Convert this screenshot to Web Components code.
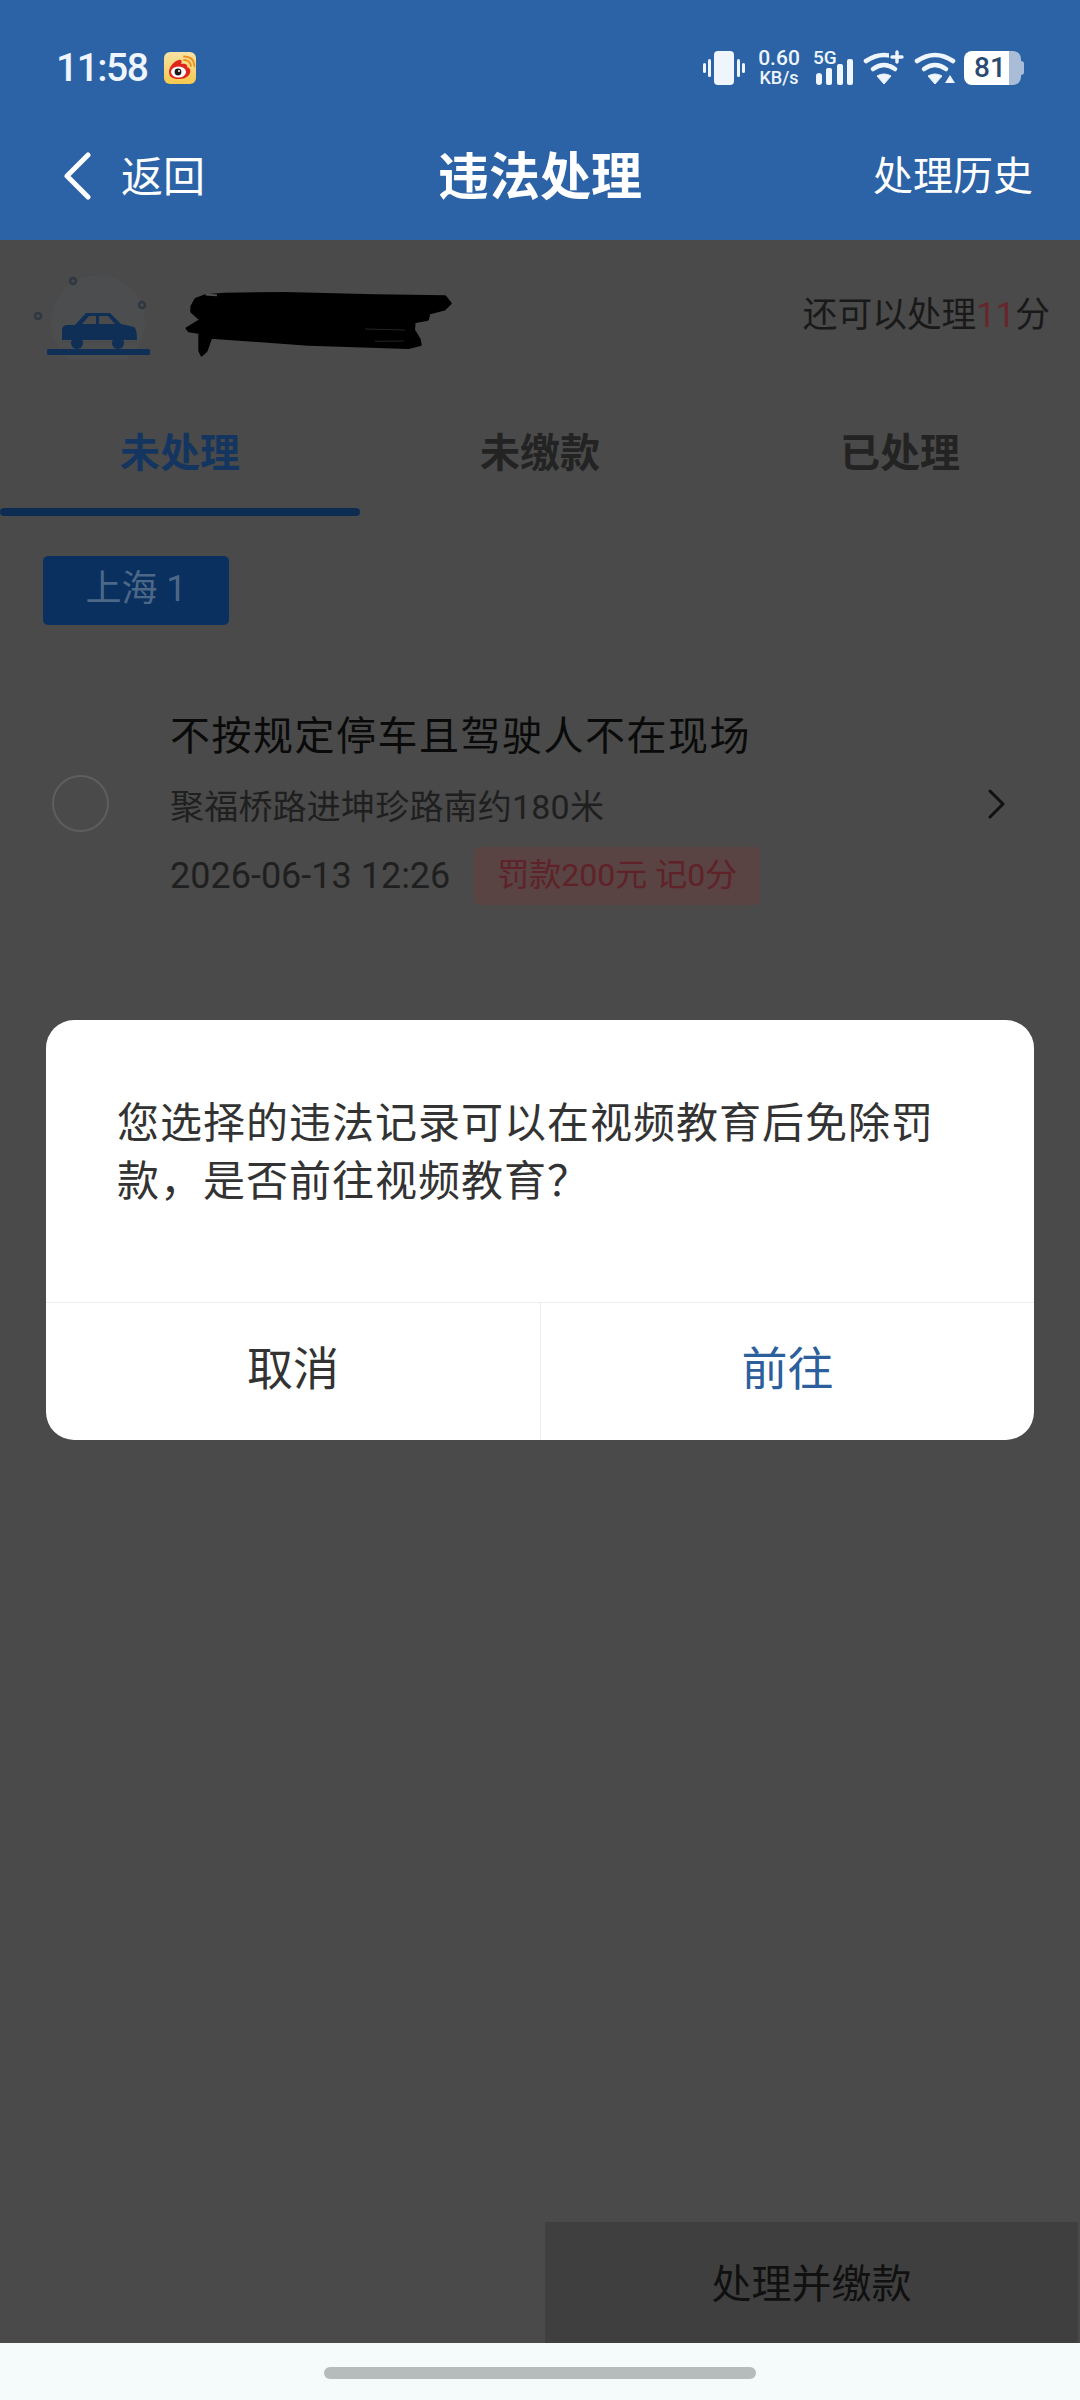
<!DOCTYPE html>
<html lang="zh-CN">
<head>
<meta charset="utf-8">
<title>违法处理</title>
<style>
    html, body { margin: 0; padding: 0; }
    body {
        width: 1080px;
        height: 2400px;
        overflow: hidden;
        font-family: Roboto, "Noto Sans CJK SC", sans-serif;
    }
</style>
</head>
<body>
<phone-screen>
    <status-bar slot="top"></status-bar>
    <title-bar slot="top" back="返回" action="处理历史">违法处理</title-bar>

    <plate-summary>还可以处理<em>11</em>分</plate-summary>
    <tab-strip>
        <tab-item active>未处理</tab-item>
        <tab-item>未缴款</tab-item>
        <tab-item>已处理</tab-item>
    </tab-strip>
    <region-tag>上海 1</region-tag>
    <violation-item place="聚福桥路进坤珍路南约180米" time="2026-06-13 12:26" fine="罚款200元 记0分">不按规定停车且驾驶人不在现场</violation-item>
    <action-bar slot="bottom">处理并缴款</action-bar>
    <confirm-dialog slot="overlay" cancel="取消" confirm="前往">您选择的违法记录可以在视频教育后免除罚款，是否前往视频教育？</confirm-dialog>

    <gesture-bar slot="nav"></gesture-bar>
</phone-screen>

<script>
const cjk = 'Roboto, "Noto Sans CJK SC", sans-serif';

class PhoneScreen extends HTMLElement {
    constructor() {
        super();
        this.attachShadow({ mode: 'open' });
        this.shadowRoot.innerHTML = `
            <style>
                :host { display: flex; flex-direction: column; width: 1080px; height: 2400px; background: #f5fafa; }
                header { background: #2c63a6; flex: none; }
                main {
                    position: relative;
                    flex: 1;
                    display: flex;
                    flex-direction: column;
                    background: #494a49;
                }
                .content { flex: 1; display: flex; flex-direction: column; }
            </style>
            <header><slot name="top"></slot></header>
            <main>
                <div class="content"><slot></slot></div>
                <slot name="bottom"></slot>
                <slot name="overlay"></slot>
            </main>
            <slot name="nav"></slot>
        `;
    }
}

const wifiArcs = `
    <path d="M3 11Q21 -1 39 11" fill="none" stroke="currentColor" stroke-width="4.6" stroke-linecap="round"/>
    <path d="M10 19Q21 11 32 19" fill="none" stroke="currentColor" stroke-width="4.6" stroke-linecap="round"/>
    <path d="M14 26Q21 22 28 26L21 34Z" fill="currentColor" stroke="currentColor" stroke-width="1" stroke-linejoin="round"/>`;

class StatusBar extends HTMLElement {
    constructor() {
        super();
        this.attachShadow({ mode: 'open' });
        this.shadowRoot.innerHTML = `
            <style>
                :host {
                    display: flex;
                    align-items: center;
                    height: 120px;
                    box-sizing: border-box;
                    padding: 16px 56px 0 56px;
                    color: #eef5fd;
                    font-family: ${cjk};
                }
                .time { font-size: 39px; font-weight: 500; line-height: 40px; letter-spacing: -1.500px; }
                .app { width: 32px; height: 32px; margin-left: 17px; }
                .right { margin-left: auto; display: flex; align-items: center; }
                svg { display: block; }
                .speed { margin-left: 12px; width: 44px; text-align: center; font-weight: 500; }
                .speed div:first-child { font-size: 21px; line-height: 20px; }
                .speed div:last-child { font-size: 18px; line-height: 20px; }
                .signal { position: relative; width: 40px; height: 36px; margin-left: 13px; }
                .signal span { position: absolute; left: -1px; top: -1px; font-size: 19px; line-height: 17px; font-weight: 500; }
                .wifi { margin-left: 9px; }
                .battery {
                    position: relative;
                    width: 57px;
                    height: 34px;
                    margin-left: 8px;
                    border-radius: 8px;
                    background: linear-gradient(to right, #fff 45px, #a9bdd9 45px);
                    color: #2b4a72;
                    font-size: 28px;
                    font-weight: 500;
                    line-height: 34px;
                }
                .battery span { position: absolute; left: 10px; top: 0; }
                .nub { width: 3px; height: 14px; background: #a9bdd9; border-radius: 0 3px 3px 0; }
            </style>
            <span class="time">11:58</span>
            <svg class="app" viewBox="0 0 32 32">
                <defs><linearGradient id="wb" x1="0" y1="0" x2="0" y2="1"><stop offset="0" stop-color="#f6e3a4"/><stop offset="1" stop-color="#f5c94f"/></linearGradient></defs>
                <rect width="32" height="32" rx="6" fill="url(#wb)"/>
                <path d="M5 20C5 15 10 9 15 8C18 7 18 10 17 12C20 11 24 12 23 15C26 16 27 18 26 21C24 26 19 27 14 27C9 27 5 25 5 20Z" fill="#e0261c"/>
                <ellipse cx="14.5" cy="20" rx="7.5" ry="5.6" fill="#fff"/>
                <circle cx="14" cy="20" r="3.4" fill="#1b1b1b"/>
                <circle cx="15" cy="19" r="1" fill="#fff"/>
                <path d="M20 8Q26 8 27 14M20 4.500Q30 4.500 30.500 14" fill="none" stroke="#ef8f1e" stroke-width="1.800" stroke-linecap="round"/>
            </svg>
            <div class="right">
                <svg width="42" height="34" viewBox="0 0 42 34" fill="currentColor">
                    <rect x="11" y="0" width="20" height="34" rx="4"/>
                    <rect x="0" y="12" width="3" height="10" rx="1.500"/>
                    <rect x="5" y="8" width="3" height="18" rx="1.500"/>
                    <rect x="34" y="8" width="3" height="18" rx="1.500"/>
                    <rect x="39" y="12" width="3" height="10" rx="1.500"/>
                </svg>
                <div class="speed"><div>0.60</div><div>KB/s</div></div>
                <div class="signal">
                    <span>5G</span>
                    <svg width="40" height="36" viewBox="0 0 40 36" fill="currentColor">
                        <rect x="2" y="23" width="6" height="12" rx="3"/>
                        <rect x="12" y="18" width="6" height="17" rx="2"/>
                        <rect x="23" y="14" width="6" height="21" rx="2"/>
                        <rect x="33" y="9" width="6" height="26" rx="2"/>
                    </svg>
                </div>
                <svg class="wifi" width="42" height="36" viewBox="0 0 42 36" color="#eef5fd">
                    ${wifiArcs}
                    <path d="M26 0h16v14H26z" fill="#2c63a6"/>
                    <path d="M34 2V12M29 7H39" stroke="currentColor" stroke-width="3.400" stroke-linecap="round"/>
                </svg>
                <svg class="wifi" width="42" height="36" viewBox="0 0 42 36" color="#eef5fd">
                    ${wifiArcs}
                    <path d="M28 23h14v12H28z" fill="#2c63a6"/>
                    <path d="M31 33L36 25L41 33Z" fill="currentColor"/>
                </svg>
                <div class="battery"><span>81</span></div>
                <div class="nub"></div>
            </div>
        `;
    }
}

class TitleBar extends HTMLElement {
    constructor() {
        super();
        this.attachShadow({ mode: 'open' });
        this.shadowRoot.innerHTML = `
            <style>
                :host {
                    display: grid;
                    grid-template-columns: 1fr auto 1fr;
                    align-items: center;
                    height: 120px;
                    box-sizing: border-box;
                    padding: 0 47px 14px 64px;
                    color: #fff;
                    font-family: ${cjk};
                }
                .back { display: flex; align-items: center; gap: 30px; font-size: 42px; }
                .back svg { margin-top: 6px; margin-left: -1px; }
                .title { font-size: 51px; font-weight: 700; margin-left: -17px; }
                .action { justify-self: end; font-size: 40px; }
            </style>
            <div class="back">
                <svg width="28" height="48" viewBox="0 0 28 48"><path d="M25 3L4 24L25 45" fill="none" stroke="#fff" stroke-width="5" stroke-linecap="round" stroke-linejoin="round"/></svg>
                <span>${this.getAttribute('back')}</span>
            </div>
            <div class="title"><slot></slot></div>
            <div class="action">${this.getAttribute('action')}</div>
        `;
    }
}

class PlateSummary extends HTMLElement {
    constructor() {
        super();
        this.attachShadow({ mode: 'open' });
        this.shadowRoot.innerHTML = `
            <style>
                :host {
                    display: flex;
                    align-items: flex-start;
                    height: 150px;
                    box-sizing: border-box;
                    padding: 25px 30px 0 25px;
                    font-family: ${cjk};
                    color: #191919;
                }
                svg { display: block; }
                .car { width: 125px; height: 95px; flex: none; }
                .scribble { width: 290px; height: 80px; margin: 15px 0 0 25px; flex: none; }
                .left { margin-left: auto; font-size: 34.700px; line-height: 50px; margin-top: 25px; }
                ::slotted(em) { font-style: normal; color: #66262c; }
            </style>
            <svg class="car" viewBox="25 265 125 95">
                <circle cx="98" cy="322" r="47" fill="#4b4d4f"/>
                <g fill="none" stroke="#2f3742" stroke-width="2.400">
                    <circle cx="73" cy="281" r="3"/>
                    <circle cx="142" cy="305" r="3"/>
                    <circle cx="38" cy="316" r="3"/>
                </g>
                <path d="M62 330Q62 325 68 325H75L86 313H110L121 324L134 327Q137 329 137 340H62Z" fill="#0f2f56"/>
                <path d="M82 324L89 316H96V324ZM99 316H108L115 324H99Z" fill="#494a49"/>
                <rect x="62" y="341" width="75" height="1.500" fill="#494a49"/>
                <circle cx="77" cy="343" r="6" fill="#0f2f56"/>
                <circle cx="118" cy="343" r="6" fill="#0f2f56"/>
                <rect x="47" y="349" width="103" height="6" rx="1.500" fill="#0f2f56"/>
            </svg>
            <svg class="scribble" viewBox="0 0 870 240">
                <path d="M50 80L62 58L90 47L150 42L330 40L600 47L810 50L826 70L808 88L762 100L758 118L718 126L716 150L733 178L736 194L700 203L400 193L108 172L94 212L80 225L74 212L74 158L42 153L36 145L78 120L50 95Z" fill="#000" stroke="#000" stroke-width="8" stroke-linejoin="round"/>
                <path d="M570 147L690 150M600 184L688 183" stroke="#2b2b2b" stroke-width="2.500"/>
                <path d="M92 44L126 46" stroke="#555" stroke-width="5"/>
            </svg>
            <div class="left"><slot></slot></div>
        `;
    }
}

class TabStrip extends HTMLElement {
    constructor() {
        super();
        this.attachShadow({ mode: 'open' });
        this.shadowRoot.innerHTML = `
            <style>
                :host { display: grid; grid-template-columns: 360px 360px 360px; height: 126px; }
            </style>
            <slot></slot>
        `;
    }
}

class TabItem extends HTMLElement {
    constructor() {
        super();
        this.attachShadow({ mode: 'open' });
        this.shadowRoot.innerHTML = `
            <style>
                :host {
                    display: block;
                    box-sizing: border-box;
                    padding-top: 34px;
                    text-align: center;
                    font-family: ${cjk};
                    font-size: 40px;
                    line-height: 60px;
                    font-weight: 700;
                    color: #232323;
                }
                :host([active]) { color: #143560; }
                .bar { display: none; height: 8px; margin-top: 24px; border-radius: 4px; background: #0d2c52; }
                :host([active]) .bar { display: block; }
            </style>
            <div><slot></slot></div>
            <div class="bar"></div>
        `;
    }
}

class RegionTag extends HTMLElement {
    constructor() {
        super();
        this.attachShadow({ mode: 'open' });
        this.shadowRoot.innerHTML = `
            <style>
                :host {
                    display: block;
                    align-self: flex-start;
                    width: 186px;
                    height: 69px;
                    margin: 40px 0 0 43px;
                    border-radius: 5px;
                    background: #0a3060;
                    color: #4d6887;
                    font-family: ${cjk};
                    font-size: 36px;
                    line-height: 66px;
                    text-align: center;
                }
            </style>
            <slot></slot>
        `;
    }
}

class ViolationItem extends HTMLElement {
    constructor() {
        super();
        this.attachShadow({ mode: 'open' });
        this.shadowRoot.innerHTML = `
            <style>
                :host {
                    display: flex;
                    align-items: center;
                    margin-top: 77px;
                    padding-left: 52px;
                    font-family: ${cjk};
                }
                .radio { width: 57px; height: 57px; box-sizing: border-box; border: 2px solid #5e5e5e; border-radius: 50%; flex: none; }
                .text { margin-left: 61px; flex: 1; }
                .title { font-size: 40px; line-height: 70px; letter-spacing: 1.500px; color: #0a0a0a; }
                .place { font-size: 34px; line-height: 60px; letter-spacing: 0.200px; margin-top: 5px; color: #1f1f1f; }
                .when { display: flex; align-items: center; margin-top: 10px; font-size: 36px; color: #1f1f1f; }
                .fine {
                    margin-left: 24px;
                    padding: 0 23px;
                    height: 58px;
                    line-height: 56px;
                    font-size: 32px;
                    border-radius: 5px;
                    background: #5a4343;
                    color: #5e2228;
                }
                svg { margin-right: 73px; flex: none; }
            </style>
            <div class="radio"></div>
            <div class="text">
                <div class="title"><slot></slot></div>
                <div class="place">${this.getAttribute('place')}</div>
                <div class="when"><span>${this.getAttribute('time')}</span><span class="fine">${this.getAttribute('fine')}</span></div>
            </div>
            <svg width="20" height="30" viewBox="0 0 20 30"><path d="M3 2L16 15L3 28" fill="none" stroke="#111" stroke-width="3" stroke-linecap="round" stroke-linejoin="round"/></svg>
        `;
    }
}

class ActionBar extends HTMLElement {
    constructor() {
        super();
        this.attachShadow({ mode: 'open' });
        this.shadowRoot.innerHTML = `
            <style>
                :host { display: flex; justify-content: flex-end; height: 121px; background: #4a4a4a; font-family: ${cjk}; }
                div {
                    width: 533px;
                    margin-right: 2px;
                    background: #3f3f3f;
                    color: #101010;
                    font-size: 40px;
                    line-height: 125px;
                    text-align: center;
                }
            </style>
            <div><slot></slot></div>
        `;
    }
}

class ConfirmDialog extends HTMLElement {
    constructor() {
        super();
        this.attachShadow({ mode: 'open' });
        this.shadowRoot.innerHTML = `
            <style>
                :host {
                    position: absolute;
                    left: 46px;
                    top: 780px;
                    width: 988px;
                    height: 420px;
                    display: flex;
                    flex-direction: column;
                    border-radius: 28px;
                    background: #fff;
                    overflow: hidden;
                    font-family: ${cjk};
                }
                .message {
                    flex: 1;
                    padding: 75px 71px 0 71px;
                    font-size: 42px;
                    line-height: 58px;
                    letter-spacing: 1px;
                    color: #333;
                }
                .buttons { display: grid; grid-template-columns: 494px 1fr; height: 137px; border-top: 1px solid #eee; }
                .buttons div { font-size: 46px; line-height: 132px; text-align: center; color: #333; }
                .buttons div + div { border-left: 1px solid #eee; color: #2c5f9c; }
            </style>
            <div class="message"><slot></slot></div>
            <div class="buttons">
                <div>${this.getAttribute('cancel')}</div>
                <div>${this.getAttribute('confirm')}</div>
            </div>
        `;
    }
}

class GestureBar extends HTMLElement {
    constructor() {
        super();
        this.attachShadow({ mode: 'open' });
        this.shadowRoot.innerHTML = `
            <style>
                :host { display: flex; justify-content: center; height: 57px; box-sizing: border-box; padding-top: 24px; background: #f5fafa; }
                div { width: 432px; height: 12px; border-radius: 6px; background: #b6bcbc; }
            </style>
            <div></div>
        `;
    }
}

customElements.define('phone-screen', PhoneScreen);
customElements.define('status-bar', StatusBar);
customElements.define('title-bar', TitleBar);
customElements.define('plate-summary', PlateSummary);
customElements.define('tab-strip', TabStrip);
customElements.define('tab-item', TabItem);
customElements.define('region-tag', RegionTag);
customElements.define('violation-item', ViolationItem);
customElements.define('action-bar', ActionBar);
customElements.define('confirm-dialog', ConfirmDialog);
customElements.define('gesture-bar', GestureBar);
</script>
</body>
</html>
